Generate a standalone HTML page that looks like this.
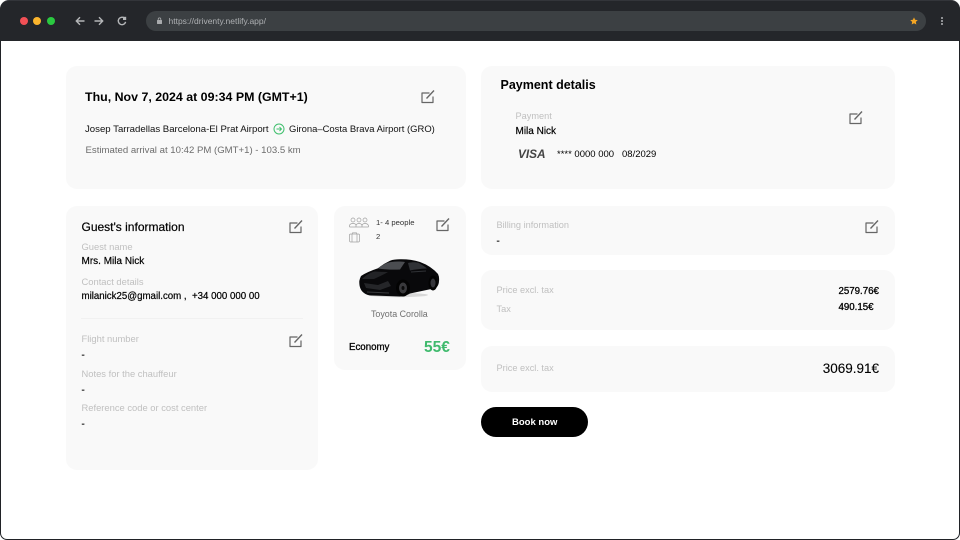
<!DOCTYPE html>
<html>
<head>
<meta charset="utf-8">
<style>
html,body{margin:0;padding:0;width:960px;height:540px;overflow:hidden;background:#fff}
body{font-family:"Liberation Sans",Arial,sans-serif;position:relative}
#frame{position:absolute;left:0;top:0;width:958px;height:539px;background:#fff;border:1px solid #202226;border-top:0;border-radius:10px 10px 7px 7px;overflow:hidden}
#bar{position:absolute;left:0;top:0;width:960px;height:41px;background:#24262a;border-top:1px solid #33353a;box-sizing:border-box;border-radius:9px 9px 0 0}
.d{position:absolute;width:8px;height:8px;border-radius:50%;top:17px}
#url{position:absolute;left:146px;top:11px;width:780px;height:20px;border-radius:10px;background:#3c4043}
.t{position:absolute;white-space:nowrap;line-height:1}
.c{position:absolute;background:#f9f9f9;border-radius:11px}
.g{color:#c0c0c0;font-size:9.200px}
.h{color:#c0c0c0;font-size:9.400px}
.k{color:#000;font-size:9.700px;font-weight:400}
.m{-webkit-text-stroke:.2px #000}
svg{position:absolute}
</style>
</head>
<body>
<div id="frame"></div>
<div id="bar"></div>
<div class="d" style="left:20px;background:#f25056"></div>
<div class="d" style="left:33px;background:#fbb52d"></div>
<div class="d" style="left:47px;background:#2ac940"></div>
<svg style="left:74px;top:14px" width="56" height="14" viewBox="0 0 56 14" fill="none" stroke="#b4b6b8" stroke-width="1.400">
<path d="M10.500 7H2.500M6 3.200 2.300 7 6 10.800"/>
<path d="M20.500 7H28.500M25 3.200 28.700 7 25 10.800"/>
<path d="M50.500 4.200A3.700 3.700 0 1 0 51.600 7.800"/><path d="M49 2.800h3.200v3.200h-3.200z" fill="#b4b6b8" stroke="none"/>
</svg>
<div id="url"></div>
<svg style="left:156px;top:17px" width="7" height="8" viewBox="0 0 7 8"><rect x="1" y="3" width="5" height="4" rx=".5" fill="#a9abad"/><path d="M2.200 3.500V2.200a1.300 1.300 0 0 1 2.600 0V3.500" fill="none" stroke="#a9abad" stroke-width=".8"/></svg>
<div class="t" style="left:168.500px;top:16.500px;font-size:8.500px;color:#aeb0b3">https://driventy.netlify.app/</div>
<svg style="left:910px;top:17px" width="8" height="8" viewBox="0 0 10 10"><path d="M5 .5 6.400 3.500 9.700 3.900 7.300 6.100 7.900 9.400 5 7.800 2.100 9.400 2.700 6.100.3 3.900 3.600 3.500Z" fill="#f5a623"/></svg>
<svg style="left:940px;top:16px" width="4" height="10" viewBox="0 0 4 10" fill="#8e9093"><rect x="1" y="1" width="2" height="2"/><rect x="1" y="4" width="2" height="2"/><rect x="1" y="7" width="2" height="2"/></svg>

<div class="c" style="left:66px;top:66px;width:400px;height:123px"></div>
<div class="c" style="left:481px;top:66px;width:414px;height:123px"></div>
<div class="c" style="left:66px;top:206px;width:252px;height:264px"></div>
<div class="c" style="left:334px;top:206px;width:132px;height:164px"></div>
<div class="c" style="left:481px;top:206px;width:414px;height:49px"></div>
<div class="c" style="left:481px;top:270px;width:414px;height:60px"></div>
<div class="c" style="left:481px;top:346px;width:414px;height:46px"></div>

<div class="t" style="left:85px;top:91px;font-size:12.400px;font-weight:700;color:#000">Thu, Nov 7, 2024 at 09:34 PM (GMT+1)</div>
<div class="t" style="left:85px;top:124.500px;font-size:9.620px;color:#111">Josep Tarradellas Barcelona-El Prat Airport</div>
<svg style="left:273px;top:123px" width="12" height="12" viewBox="0 0 12 12" fill="none" stroke="#3fbf6d"><circle cx="6" cy="6" r="5"/><path d="M3.500 6h5M6.500 4 8.500 6 6.500 8" stroke-width=".9"/></svg>
<div class="t" style="left:289px;top:124.500px;font-size:9.450px;color:#111">Girona–Costa Brava Airport (GRO)</div>
<div class="t" style="left:85.500px;top:145.500px;font-size:9.600px;color:#6d6d6d">Estimated arrival at 10:42 PM (GMT+1) - 103.5 km</div>

<div class="t" style="left:500.500px;top:79px;font-size:12.500px;font-weight:700;color:#000">Payment detalis</div>
<div class="t g" style="left:515.500px;top:112px">Payment</div>
<div class="t k m" style="left:515.500px;top:127px;font-size:10px">Mila Nick</div>
<div class="t" style="left:518px;top:149px;font-size:11.800px;font-weight:700;font-style:italic;color:#444">VISA</div>
<div class="t k" style="left:557px;top:149.500px;font-size:9.500px">**** 0000 000</div>
<div class="t k" style="left:622px;top:149.500px;font-size:9.500px">08/2029</div>

<div class="t" style="left:81.500px;top:221px;font-size:12px;color:#000;-webkit-text-stroke:.2px #000">Guest's information</div>
<div class="t h" style="left:81.500px;top:242px">Guest name</div>
<div class="t k m" style="left:81.500px;top:257px;font-size:10px">Mrs. Mila Nick</div>
<div class="t h" style="left:81.500px;top:277px">Contact details</div>
<div class="t k m" style="left:81.500px;top:292px">milanick25@gmail.com ,&nbsp; +34 000 000 00</div>
<div style="position:absolute;left:81px;top:318px;width:222px;height:1px;background:#f1f1f1"></div>
<div class="t h" style="left:81.500px;top:334px">Flight number</div>
<div class="t k m" style="left:81.500px;top:351px">-</div>
<div class="t h" style="left:81.500px;top:369px">Notes for the chauffeur</div>
<div class="t k m" style="left:81.500px;top:385.500px">-</div>
<div class="t h" style="left:81.500px;top:403px">Reference code or cost center</div>
<div class="t k m" style="left:81.500px;top:420px">-</div>

<svg style="left:349px;top:217px" width="20" height="26" viewBox="0 0 20 26" fill="none" stroke="#a0a0a0" stroke-width=".7">
<circle cx="4" cy="3" r="2"/><circle cx="10" cy="3" r="2"/><circle cx="16" cy="3" r="2"/>
<path d="M.5 10V8.500Q1 6.500 4 6.500T7 8.500V10M7 10V8.500Q7.500 6.500 10 6.500T13 8.500V10M13 10V8.500Q13.500 6.500 16 6.500T19.500 8.500V10M.5 10H19.500"/>
<rect x=".5" y="17" width="10" height="8" rx="1.200"/><path d="M3 17V25M8 17V25M3.500 17V15.800H7.500V17"/>
</svg>
<div class="t" style="left:376px;top:219px;font-size:7.700px;color:#333">1- 4 people</div>
<div class="t" style="left:376px;top:232.500px;font-size:7.700px;color:#333">2</div>

<svg style="left:358px;top:257px;filter:blur(.35px)" width="83" height="43" viewBox="0 0 83 43">
<ellipse cx="40" cy="38" rx="30" ry="2.200" fill="#d8d8d8"/>
<path d="M1.300 24C1 30 3 34 6 36Q9 38.500 14 38.500L42 39.500Q48 39 52 36.500L78 31Q81 28 81 24 81.500 20 80 17 73 9 62 5 52 2 42 2.300 36 2.300 32 3.700 25 7 20 11.300 9 15 3 19 2 21 1.300 24Z" fill="#09090b"/>
<path d="M20 11.500C24 8 29 5.500 33 5 38 4.300 43 4.500 47 5 45 8 43 11 42 12.500 34 12.800 27 12.500 20 11.500Z" fill="#4b4d51"/>
<path d="M50 6C54 5 58 5 61 6 64 8 67 9.500 69 11.500 62 11.800 57 12.500 52 13.500Z" fill="#303236"/>
<path d="M4 22C8 18 13 15 17 14.500 22 14.800 26 15 30 15 25 18 20 20 16 22Z" fill="#222326"/>
<path d="M6 26 20 28 30 24 33 29 22 33 8 31Z" fill="#252629"/>
<path d="M9 35 31 36" stroke="#38393c" stroke-width="1"/>
<path d="M53 15 68 14" stroke="#303236" stroke-width="1"/>
<ellipse cx="45" cy="31" rx="7" ry="8.500" fill="#030303"/><ellipse cx="45" cy="31" rx="4" ry="5.500" fill="#39393c"/><ellipse cx="45" cy="31" rx="1.500" ry="2" fill="#0a0a0a"/>
<ellipse cx="75" cy="26" rx="4.500" ry="7.500" fill="#030303"/><ellipse cx="75" cy="26" rx="2.500" ry="4.500" fill="#35353a"/>
</svg>
<div class="t" style="left:371px;top:309.500px;font-size:8.900px;color:#707070">Toyota Corolla</div>
<div class="t" style="left:349px;top:342.500px;font-size:9.700px;color:#000;-webkit-text-stroke:.3px #000">Economy</div>
<div class="t" style="left:424px;top:340px;font-size:15.500px;font-weight:700;color:#3fba6d">55€</div>

<div class="t g" style="left:496.500px;top:221px">Billing information</div>
<div class="t k m" style="left:496.500px;top:237px">-</div>
<div class="t g" style="left:496.500px;top:286px">Price excl. tax</div>
<div class="t g" style="left:496.500px;top:304.500px">Tax</div>
<div class="t k" style="left:838.500px;top:286.500px;-webkit-text-stroke:.3px #000">2579.76€</div>
<div class="t k" style="left:838.500px;top:302.500px;-webkit-text-stroke:.3px #000">490.15€</div>
<div class="t g" style="left:496.500px;top:364px">Price excl. tax</div>
<div class="t" style="right:81px;top:362px;font-size:13.500px;color:#000;-webkit-text-stroke:.1px #000">3069.91€</div>
<div style="position:absolute;left:481px;top:407px;width:107px;height:30px;border-radius:15px;background:#000"></div>
<div class="t" style="left:512px;top:417.500px;font-size:9.500px;font-weight:700;color:#fff">Book now</div>

<svg style="left:421px;top:89px" width="14" height="15" viewBox="0 0 14 15" fill="none" stroke="#666" stroke-width="1.200" stroke-linejoin="round"><path d="M8.500 4H1V13.500H12V7.500"/><path d="M5.500 9.500 13 1.500" stroke-width="1.400"/></svg>
<svg style="left:849px;top:110px" width="14" height="15" viewBox="0 0 14 15" fill="none" stroke="#666" stroke-width="1.200" stroke-linejoin="round"><path d="M8.500 4H1V13.500H12V7.500"/><path d="M5.500 9.500 13 1.500" stroke-width="1.400"/></svg>
<svg style="left:289px;top:219px" width="14" height="15" viewBox="0 0 14 15" fill="none" stroke="#666" stroke-width="1.200" stroke-linejoin="round"><path d="M8.500 4H1V13.500H12V7.500"/><path d="M5.500 9.500 13 1.500" stroke-width="1.400"/></svg>
<svg style="left:289px;top:333px" width="14" height="15" viewBox="0 0 14 15" fill="none" stroke="#666" stroke-width="1.200" stroke-linejoin="round"><path d="M8.500 4H1V13.500H12V7.500"/><path d="M5.500 9.500 13 1.500" stroke-width="1.400"/></svg>
<svg style="left:436px;top:217px" width="14" height="15" viewBox="0 0 14 15" fill="none" stroke="#666" stroke-width="1.200" stroke-linejoin="round"><path d="M8.500 4H1V13.500H12V7.500"/><path d="M5.500 9.500 13 1.500" stroke-width="1.400"/></svg>
<svg style="left:865px;top:219px" width="14" height="15" viewBox="0 0 14 15" fill="none" stroke="#666" stroke-width="1.200" stroke-linejoin="round"><path d="M8.500 4H1V13.500H12V7.500"/><path d="M5.500 9.500 13 1.500" stroke-width="1.400"/></svg>
</body>
</html>
